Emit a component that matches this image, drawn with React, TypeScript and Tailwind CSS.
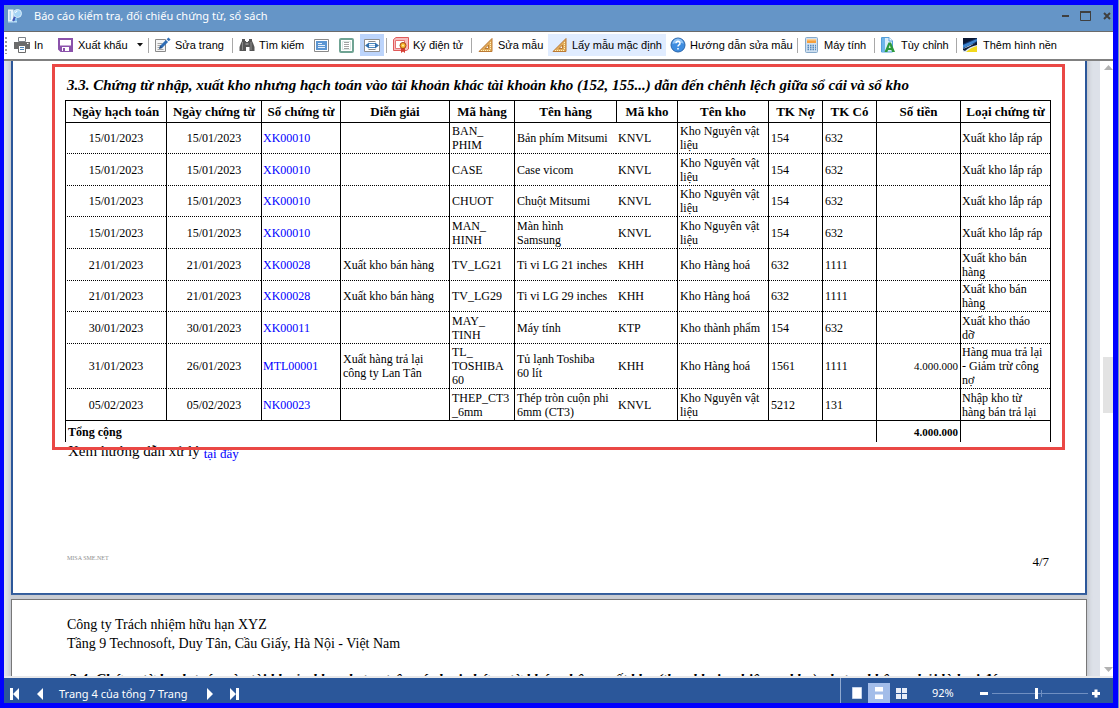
import React, { useState } from 'react';

interface VoucherRow {
  posted: string;
  date: string;
  no: string;
  desc: string;
  item: string[];
  itemName: string;
  store: string;
  storeName: string;
  debit: string;
  credit: string;
  amount: string;
  type: string;
  height: string;
}

const rows: VoucherRow[] = [
  { posted: '15/01/2023', date: '15/01/2023', no: 'XK00010', desc: '', item: ['BAN_', 'PHIM'], itemName: 'Bản phím Mitsumi', store: 'KNVL', storeName: 'Kho Nguyên vật liệu', debit: '154', credit: '632', amount: '', type: 'Xuất kho lắp ráp', height: 'h-[31px]' },
  { posted: '15/01/2023', date: '15/01/2023', no: 'XK00010', desc: '', item: ['CASE'], itemName: 'Case vicom', store: 'KNVL', storeName: 'Kho Nguyên vật liệu', debit: '154', credit: '632', amount: '', type: 'Xuất kho lắp ráp', height: 'h-8' },
  { posted: '15/01/2023', date: '15/01/2023', no: 'XK00010', desc: '', item: ['CHUOT'], itemName: 'Chuột Mitsumi', store: 'KNVL', storeName: 'Kho Nguyên vật liệu', debit: '154', credit: '632', amount: '', type: 'Xuất kho lắp ráp', height: 'h-[31px]' },
  { posted: '15/01/2023', date: '15/01/2023', no: 'XK00010', desc: '', item: ['MAN_', 'HINH'], itemName: 'Màn hình\nSamsung', store: 'KNVL', storeName: 'Kho Nguyên vật liệu', debit: '154', credit: '632', amount: '', type: 'Xuất kho lắp ráp', height: 'h-8' },
  { posted: '21/01/2023', date: '21/01/2023', no: 'XK00028', desc: 'Xuất kho bán hàng', item: ['TV_LG21'], itemName: 'Ti vi LG 21 inches', store: 'KHH', storeName: 'Kho Hàng hoá', debit: '632', credit: '1111', amount: '', type: 'Xuất kho bán hàng', height: 'h-8' },
  { posted: '21/01/2023', date: '21/01/2023', no: 'XK00028', desc: 'Xuất kho bán hàng', item: ['TV_LG29'], itemName: 'Ti vi LG 29 inches', store: 'KHH', storeName: 'Kho Hàng hoá', debit: '632', credit: '1111', amount: '', type: 'Xuất kho bán hàng', height: 'h-[31px]' },
  { posted: '30/01/2023', date: '30/01/2023', no: 'XK00011', desc: '', item: ['MAY_', 'TINH'], itemName: 'Máy tính', store: 'KTP', storeName: 'Kho thành phẩm', debit: '154', credit: '632', amount: '', type: 'Xuất kho tháo\ndỡ', height: 'h-8' },
  { posted: '31/01/2023', date: '26/01/2023', no: 'MTL00001', desc: 'Xuất hàng trả lại công ty Lan Tân', item: ['TL_', 'TOSHIBA', '60'], itemName: 'Tủ lạnh Toshiba\n60 lít', store: 'KHH', storeName: 'Kho Hàng hoá', debit: '1561', credit: '1111', amount: '4.000.000', type: 'Hàng mua trả lại - Giảm trừ công nợ', height: 'h-[45px]' },
  { posted: '05/02/2023', date: '05/02/2023', no: 'NK00023', desc: '', item: ['THEP_CT3', '_6mm'], itemName: 'Thép tròn cuộn phi 6mm (CT3)', store: 'KNVL', storeName: 'Kho Nguyên vật liệu', debit: '5212', credit: '131', amount: '', type: 'Nhập kho từ\nhàng bán trả lại', height: 'h-8' },
];

const columns = [
  { title: 'Ngày hạch toán', width: 'w-[101px]' },
  { title: 'Ngày chứng từ', width: 'w-[95px]' },
  { title: 'Số chứng từ', width: 'w-[79px]' },
  { title: 'Diễn giải', width: '' },
  { title: 'Mã hàng', width: 'w-[65px]' },
  { title: 'Tên hàng', width: 'w-[102px]' },
  { title: 'Mã kho', width: 'w-[61px]' },
  { title: 'Tên kho', width: 'w-[91px]' },
  { title: 'TK Nợ', width: 'w-[54px]' },
  { title: 'TK Có', width: 'w-[54px]' },
  { title: 'Số tiền', width: 'w-[84px]' },
  { title: 'Loại chứng từ', width: 'w-[90px]' },
];

const Icon = ({ children }: { children: React.ReactNode }) => (
  <svg width="16" height="16" viewBox="0 0 16 16" fill="none" className="shrink-0" aria-hidden="true">
    {children}
  </svg>
);

const AppIcon = () => (
  <Icon>
    <path d="M1 1.500h5.500v12H1z" fill="#e8f4fc" />
    <path d="M1 13h9v1.500H1z" fill="#b8dcf4" />
    <path d="M2.500 3h1.500v9H2.500z" fill="#a9d2ef" />
    <circle cx="10.500" cy="5.500" r="4" fill="#a5d4f5" stroke="#d7ecfa" />
    <path d="M8.500 5a2 2 0 0 1 2-2" stroke="#fff" />
    <path d="M8 9l-2 4" stroke="#4356b8" strokeWidth="2" />
    <path d="M9 10v3" stroke="#7fbdec" strokeWidth="2" />
  </Icon>
);

const PrintIcon = () => (
  <Icon>
    <path d="M4.500.5h7v4h-7z" fill="#fff" stroke="#7b8187" />
    <path d="M0 5h16v7H0z" fill="#6b6b6b" />
    <path d="M13 6.500h1.500" stroke="#fff" />
    <path d="M4.500 8.500h7v7h-7z" fill="#fff" stroke="#6b6b6b" />
    <path d="M6 10.500h4M6 12.500h4" stroke="#4a86bd" />
  </Icon>
);

const SaveIcon = () => (
  <Icon>
    <path d="M1 2h13v12H3l-2-2z" fill="#fff" stroke="#8b52ab" strokeWidth="2" />
    <path d="M1 8.500h13V14H3l-2-2z" fill="#8b52ab" />
    <path d="M4 10h7v4H4z" fill="#fff" />
    <path d="M5 11h2v3H5z" fill="#8b52ab" />
  </Icon>
);

const EditIcon = () => (
  <Icon>
    <path d="M.5 2.500h10v12H.5z" fill="#f5f5f5" stroke="#8a8a8a" />
    <path d="M2.500 6.500h5M2.500 8.500h4M2.500 10.500h3M2.500 12.500h6" stroke="#a5a5a5" />
    <path d="M6 10 12 4" stroke="#2f6db5" strokeWidth="3" />
    <path d="M12.700 3.300 14.500 1.500" stroke="#2f6db5" strokeWidth="3" />
    <path d="M5 8.500l2.500 2.500-3.500 1z" fill="#1c4c86" />
  </Icon>
);

const FindIcon = () => (
  <Icon>
    <path d="M3 2h3v2h1v1h2V4h1V2h3v2l1 2 1.500 4v4h-5v-4H7v4H.5v-4L2 6l1-2z" fill="#565656" />
    <path d="M3.500 5v8M12 5v8" stroke="#8b8b8b" />
    <path d="M6.500 7h3" stroke="#bdbdbd" />
  </Icon>
);

const PageWidthIcon = () => (
  <Icon>
    <path d="M.5 2.500h14v12H.5z" fill="#fff" stroke="#8a8a8a" />
    <path d="M2 4h11v9H2z" fill="#5c96d2" />
    <path d="M4 6.500h4M4 8.500h7M4 10.500h7" stroke="#e5f0fb" />
  </Icon>
);

const WholePageIcon = () => (
  <Icon>
    <rect x="1" y="2" width="13" height="13" rx="1" fill="#fff" stroke="#6fa393" strokeWidth="2" />
    <path d="M3.500 4.500h8v8h-8z" fill="#fff" stroke="#dbe7e3" />
    <path d="M5 5.500h5M5 7.500h5M5 9.500h5M5 11.500h5" stroke="#a3a3a3" />
  </Icon>
);

const FitWidthIcon = () => (
  <Icon>
    <path d="M.5 2.500h15v12H.5z" fill="#fff" stroke="#8f8f8f" />
    <path d="M4.500 4.500h7M4.500 12.500h7" stroke="#8a8a8a" />
    <path d="M5 6.500h6M5 10.500h6" stroke="#4a86bd" />
    <path d="M5 8.500h6" stroke="#9fc0e2" />
    <path d="M1 8.500l4-3v6zM15 8.500l-4-3v6z" fill="#326fac" />
  </Icon>
);

const SignIcon = () => (
  <Icon>
    <path d="M.5 2.500 3 .5h12.500V12l-2 1.500H.5z" fill="#f7bcbc" stroke="#e05a5a" />
    <path d="M2.500 3.500h9v8h-9z" fill="#fff" stroke="#e57272" />
    <path d="M8 10v6l2-1.500 2 1.500v-6z" fill="#d63c32" />
    <circle cx="10" cy="8.500" r="3" fill="#f5b529" stroke="#a84218" />
    <circle cx="10" cy="8.500" r="1" fill="#fff0a8" />
  </Icon>
);

const RulerIcon = () => (
  <Icon>
    <path d="M14 1.500v13H1z" fill="#e3ac59" stroke="#bb7a35" />
    <path d="M10.500 8v3.500H7z" fill="#fff" stroke="#bb7a35" />
    <path d="M3 13.500h10" stroke="#fff3bd" strokeDasharray="1 1" />
    <path d="M12.500 5v8" stroke="#fff3bd" strokeDasharray="1 1" />
  </Icon>
);

const HelpIcon = () => (
  <Icon>
    <circle cx="8" cy="8" r="7" fill="#3e8de0" stroke="#2a65aa" />
    <path d="M2.500 7a5.500 5.500 0 0 1 11 0c-3-2-7-1-11 0z" fill="#8fc3f5" />
    <path d="M6 6.200a2 2 0 1 1 3 1.700c-.7.400-1 .8-1 1.600" stroke="#fff" strokeWidth="1.500" />
    <path d="M7.200 11h1.600v1.600H7.200z" fill="#fff" />
  </Icon>
);

const CalculatorIcon = () => (
  <Icon>
    <rect x="1.500" y=".5" width="12" height="15" rx="1" fill="#cfe0f0" stroke="#86a9ca" />
    <path d="M3 2h9v4H3z" fill="#f6a03c" />
    <path d="M3 2h9v1.500H3z" fill="#fbcf94" />
    <path d="M3.500 8.500h8.500M3.500 10.500h8.500M3.500 12.500h8.500" stroke="#5689bd" strokeWidth="1.300" strokeDasharray="1.500 1" />
  </Icon>
);

const CustomIcon = () => (
  <Icon>
    <path d="M.5.5H8L11.500 4v11H.5z" fill="#d7ecfb" stroke="#549fda" />
    <path d="M1 1h3v14H1z" fill="#6db5ea" />
    <path d="M8 .5V4h3.500" fill="#fff" stroke="#549fda" />
    <path d="M3.500 15 7.500 5.500H10L14 15h-3l-.6-2H7l-.6 2z" fill="#2c9a3c" />
    <path d="M7.700 11l1-3 1 3z" fill="#e2f7e0" />
  </Icon>
);

const BackgroundIcon = () => (
  <Icon>
    <path d="M0 1h14v14H0z" fill="#dfeaf6" />
    <path d="M0 1h14v5C9 7 4 9 0 12z" fill="#14386f" />
    <path d="M0 1h14C9 3 4 5 0 7z" fill="#0a1733" />
    <path d="M0 8c5-2 9-4 14-6v2C10 7 5 9 0 11z" fill="#3f86d0" />
    <path d="M0 12c5-2 9-4 14-7v3C9 9 5 11 2 14L0 13z" fill="#0d1c38" />
    <path d="M3 15c3-3 7-5 11-6v6z" fill="#f3d91c" />
  </Icon>
);

interface ToolButtonProps {
  icon: React.ReactNode;
  label: string;
  width: string;
  iconOnly?: boolean;
  active?: string;
}

const ToolButton = ({ icon, label, width, iconOnly, active = '' }: ToolButtonProps) => (
  <button
    type="button"
    aria-label={label}
    className={`flex h-[22px] shrink-0 items-center gap-1 px-1 whitespace-nowrap ${width} ${active}`}
  >
    {icon}
    {!iconOnly && <span>{label}</span>}
  </button>
);

const Separator = () => (
  <span className="flex h-[15px] w-[5px] shrink-0 justify-center">
    <span className="w-px bg-[#a8a8a8]" />
  </span>
);

const Toolbar = () => (
  <div className="flex h-[27px] shrink-0 items-center overflow-hidden bg-white pb-[1px] font-['Liberation_Sans',sans-serif] text-[11px] leading-4 text-black">
    <svg width="6" height="18" viewBox="0 0 6 18" className="shrink-0" aria-hidden="true">
      <path d="M2 1v17" stroke="#9a9a9a" strokeWidth="2" strokeDasharray="2 2" />
    </svg>
    <ToolButton icon={<PrintIcon />} label="In" width="w-[44px]" />
    <ToolButton icon={<SaveIcon />} label="Xuất khẩu" width="w-[80px]" />
    <button type="button" aria-label="Chọn định dạng xuất khẩu" className="flex h-[22px] w-3 shrink-0 items-center justify-center">
      <svg width="6" height="4" viewBox="0 0 6 4" aria-hidden="true"><path d="M0 0h6L3 3.500z" fill="#111" /></svg>
    </button>
    <Separator />
    <ToolButton icon={<EditIcon />} label="Sửa trang" width="w-[79px]" />
    <Separator />
    <ToolButton icon={<FindIcon />} label="Tìm kiếm" width="w-[75px]" />
    <ToolButton icon={<PageWidthIcon />} label="Cỡ thật" width="w-[25px]" iconOnly />
    <ToolButton icon={<WholePageIcon />} label="Cả trang" width="w-[25px]" iconOnly />
    <ToolButton icon={<FitWidthIcon />} label="Vừa chiều rộng" width="w-[24px]" iconOnly active="bg-[#bcd4fb]" />
    <Separator />
    <ToolButton icon={<SignIcon />} label="Ký điện tử" width="w-[80px]" />
    <Separator />
    <ToolButton icon={<RulerIcon />} label="Sửa mẫu" width="w-[74px]" />
    <ToolButton icon={<RulerIcon />} label="Lấy mẫu mặc định" width="w-[118px]" active="bg-[#e0ecff]" />
    <ToolButton icon={<HelpIcon />} label="Hướng dẫn sửa mẫu" width="w-[129px]" />
    <Separator />
    <ToolButton icon={<CalculatorIcon />} label="Máy tính" width="w-[72px]" />
    <Separator />
    <ToolButton icon={<CustomIcon />} label="Tùy chỉnh" width="w-[77px]" />
    <Separator />
    <ToolButton icon={<BackgroundIcon />} label="Thêm hình nền" width="w-[97px]" />
  </div>
);

const VoucherTable = () => (
  <table className="w-full table-fixed border-separate border-spacing-0 border-t border-r border-black text-[12px] leading-[14px]">
    <colgroup>
      {columns.map((col) => (
        <col key={col.title} className={col.width} />
      ))}
    </colgroup>
    <thead>
      <tr className="h-[22px] text-[13px]">
        {columns.map((col) => (
          <th key={col.title} scope="col" className="border-b border-l border-black p-0 text-center font-bold whitespace-nowrap">
            {col.title}
          </th>
        ))}
      </tr>
    </thead>
    <tbody>
      {rows.map((row, index) => {
        // the last row closes the body with a solid rule
        const line = index === rows.length - 1 ? 'border-b border-l border-black' : 'border-b border-l border-black [border-bottom-style:dotted]';
        const plain = index === rows.length - 1 ? 'border-b border-black' : 'border-b border-dotted border-black';
        return (
          <tr key={index} className={row.height}>
            <td className={`${line} p-0 text-center`}>{row.posted}</td>
            <td className={`${line} p-0 text-center`}>{row.date}</td>
            <td className={`${line} px-px py-0`}>
              <a href="#" className="text-[#0000ff]">{row.no}</a>
            </td>
            <td className={`${line} px-0.5 py-0`}>{row.desc}</td>
            <td className={`${line} px-0.5 py-0`}>
              {row.item.map((part) => (
                <React.Fragment key={part}>
                  {part}
                  <wbr />
                </React.Fragment>
              ))}
            </td>
            <td className={`${line} px-0.5 py-0 whitespace-pre-line`}>{row.itemName}</td>
            <td className={`${plain} px-0.5 py-0`}>{row.store}</td>
            <td className={`${line} px-0.5 py-0`}>{row.storeName}</td>
            <td className={`${line} px-0.5 py-0`}>{row.debit}</td>
            <td className={`${line} px-0.5 py-0`}>{row.credit}</td>
            <td className={`${line} px-0.5 py-0 text-right text-[11px]`}>{row.amount}</td>
            <td className={`${line} px-px py-0 whitespace-pre-line`}>{row.type}</td>
          </tr>
        );
      })}
    </tbody>
    <tfoot>
      <tr className="h-[21px] font-bold">
        <th scope="row" colSpan={10} className="border-l border-black px-0.5 py-0 text-left text-[12px]">Tổng cộng</th>
        <td className="border-l border-black px-0.5 py-0 text-right text-[11px]">4.000.000</td>
        <td className="border-l border-black p-0" />
      </tr>
    </tfoot>
  </table>
);

const StatusBar = () => {
  const [zoom, setZoom] = useState(46);

  return (
    <footer className="flex h-[25px] shrink-0 items-center bg-[#2b579a] pt-1.5 font-['Noto_Sans','Open_Sans',sans-serif] text-[11px] leading-4 text-white">
      <button type="button" aria-label="Trang đầu" className="ml-1.5 w-[21px]">
        <svg width="10" height="12" viewBox="0 0 10 12" aria-hidden="true"><path d="M0 0h3v12H0zM9 0v12L3 6z" fill="#fff" /></svg>
      </button>
      <button type="button" aria-label="Trang trước" className="ml-1.5 w-[22px]">
        <svg width="6" height="12" viewBox="0 0 6 12" aria-hidden="true"><path d="M6 0v12L0 6z" fill="#fff" /></svg>
      </button>
      <span className="w-[148px] whitespace-nowrap">Trang 4 của tổng 7 Trang</span>
      <button type="button" aria-label="Trang sau" className="w-[23px]">
        <svg width="6" height="12" viewBox="0 0 6 12" aria-hidden="true"><path d="M0 0v12l6-6z" fill="#fff" /></svg>
      </button>
      <button type="button" aria-label="Trang cuối">
        <svg width="9" height="12" viewBox="0 0 9 12" aria-hidden="true"><path d="M6 0h3v12H6zM0 0v12l6-6z" fill="#fff" /></svg>
      </button>

      <div className="-mt-1.5 ml-auto flex h-[25px] items-center border-l border-[#8fa9d0] pt-[5px] pl-[5px]">
        <button type="button" aria-label="Một trang" className="flex h-5 w-[22px] items-center justify-center">
          <svg width="10" height="12" viewBox="0 0 10 12" aria-hidden="true"><path d="M.5.5h9v11h-9z" fill="#fff" stroke="#c5d4ec" /></svg>
        </button>
        <button type="button" aria-label="Cuộn liên tục" className="flex h-5 w-[22px] items-center justify-center bg-[#a3bde9]">
          <svg width="8" height="12" viewBox="0 0 8 12" aria-hidden="true"><path d="M0 0h8v4.500H0zM0 7.500h8V12H0z" fill="#fff" /></svg>
        </button>
        <button type="button" aria-label="Nhiều trang" className="flex h-5 w-[23px] items-center justify-center">
          <svg width="11" height="11" viewBox="0 0 11 11" aria-hidden="true"><path d="M0 0h5v5H0zM6 0h5v5H6zM0 6h5v5H0zM6 6h5v5H6z" fill="#e8eef8" /></svg>
        </button>
        <span className="w-[50px] pl-[19px]">92%</span>
        <button type="button" aria-label="Thu nhỏ" className="ml-[17px] w-3">
          <svg width="8" height="11" viewBox="0 0 8 11" aria-hidden="true"><path d="M0 4h8v3H0z" fill="#fff" /></svg>
        </button>
        <span className="relative flex h-3 items-center">
          <span className="absolute left-[49px] h-[7px] w-px bg-[#6f8fc2]" />
          <input
            type="range"
            aria-label="Tỷ lệ thu phóng"
            value={zoom}
            onChange={(e) => setZoom(Number(e.target.value))}
            className="relative h-[11px] w-[96px] appearance-none bg-[linear-gradient(#6f8fc2,#6f8fc2)] bg-[length:100%_1px] bg-center bg-no-repeat [&::-webkit-slider-thumb]:h-[11px] [&::-webkit-slider-thumb]:w-[3px] [&::-webkit-slider-thumb]:appearance-none [&::-webkit-slider-thumb]:bg-white"
          />
        </span>
        <button type="button" aria-label="Phóng to" className="mr-3 ml-1 w-[9px]">
          <svg width="8" height="11" viewBox="0 0 8 11" aria-hidden="true"><path d="M0 4h8v3H0zM2.500 1.500h3v8h-3z" fill="#fff" /></svg>
        </button>
      </div>
    </footer>
  );
};

const App = () => {
  return (
    <div className="h-screen border-r border-[#6595c7]">
      <div className="flex h-full flex-col overflow-hidden border-t-[5px] border-r-[5px] border-b-[5px] border-l-4 border-[#0000ff] bg-white">
        <header className="flex h-[27px] shrink-0 items-center border-b border-[#6b6b6b] bg-[#6595c7] pb-1 pl-[3px] font-['Noto_Sans','Open_Sans',sans-serif] text-[11px] leading-4 text-white">
          <AppIcon />
          <h1 className="ml-[11px] flex-1 whitespace-nowrap">Báo cáo kiểm tra, đối chiếu chứng từ, sổ sách</h1>
          <button type="button" aria-label="Thu nhỏ cửa sổ" className="w-[18px]">
            <svg width="8" height="11" viewBox="0 0 8 11" aria-hidden="true"><path d="M0 4h7v2H0z" fill="#3f3f3f" /></svg>
          </button>
          <button type="button" aria-label="Phóng to cửa sổ" className="w-[23px]">
            <svg width="11" height="11" viewBox="0 0 11 11" aria-hidden="true"><path d="M.5.5h10v9H.5z" fill="none" stroke="#3f3f3f" /><path d="M0 0h11v2H0z" fill="#3f3f3f" /></svg>
          </button>
          <button type="button" aria-label="Đóng cửa sổ" className="w-[10px]">
            <svg width="8" height="8" viewBox="0 0 8 8" aria-hidden="true"><path d="M1 1l6 6M7 1 1 7" stroke="#3f3f3f" strokeWidth="2" /></svg>
          </button>
        </header>
        <Toolbar />

        <main className="flex min-h-0 flex-1 border-t-2 border-b-2 border-t-[#808080] border-b-[#e8e8ea] bg-white">
          <div className="flex min-w-0 flex-1 flex-col gap-1 overflow-hidden bg-[#dde1e9] pr-[13px] pl-[7px] font-['Liberation_Serif',serif] text-[13px] leading-[19px] text-black">
            {/* Page 4 */}
            <article className="shrink-0 border-x-2 border-b-2 border-[#2b579a] bg-white pb-[22px] shadow-[0_0_4px_2px_#c3c6cc]">
              <section className="relative z-10 mt-[3px] mr-5 ml-[39px] border-[3px] border-[#ea4845] pr-[11px] pb-[5px] pl-2.5">
                <h2 className="pt-1 pl-0.5 text-[15px] leading-[29px] font-bold whitespace-nowrap italic">
                  3.3. Chứng từ nhập, xuất kho nhưng hạch toán vào tài khoản khác tài khoản kho (152, 155...) dẫn đến chênh lệch giữa sổ cái và sổ kho
                </h2>
                <VoucherTable />
              </section>
              <p className="-mt-2 flex h-[18px] items-start gap-1 pl-[55px] text-[15px] leading-[18px]">
                Xem hướng dẫn xử lý
                <a href="#" className="pt-[3px] text-[13px] text-[#0000ff]">tại đây</a>
              </p>
              <div className="mt-[92px] mr-9 ml-[54px] flex justify-between">
                <span className="text-[6px] leading-[12px] text-[#8f8f8f]">MISA SME.NET</span>
                <span>4/7</span>
              </div>
            </article>

            {/* Page 5 */}
            <article className="min-h-0 flex-1 overflow-hidden border-x border-t border-[#777] bg-white pt-[15px] pl-[55px] text-[14px] shadow-[0_0_4px_2px_#c3c6cc]">
              <p>Công ty Trách nhiệm hữu hạn XYZ</p>
              <p>Tầng 9 Technosoft, Duy Tân, Cầu Giấy, Hà Nội - Việt Nam</p>
              <h2 className="mt-4 pl-0.5 text-[15px] leading-[20px] font-bold whitespace-nowrap italic">
                3.4. Chứng từ hạch toán vào tài khoản kho nhưng trên các loại chứng từ khác nhập, xuất kho (theo khai nghiệp vụ kho) nhưng không phải là loại đó
              </h2>
            </article>
          </div>

          {/* Vertical scroll bar */}
          <div className="flex w-[13px] shrink-0 flex-col items-end overflow-hidden bg-white pt-1 pb-1">
            <svg width="9" height="5" viewBox="0 0 9 5" aria-hidden="true"><path d="M0 5h9L4.500 0z" fill="#b2b2b2" /></svg>
            <span className="mt-[287px] h-14 w-2.5 bg-[#e3e3e3]" />
            <svg width="9" height="5" viewBox="0 0 9 5" className="mt-auto" aria-hidden="true"><path d="M0 0h9L4.500 5z" fill="#b2b2b2" /></svg>
          </div>
        </main>
        <StatusBar />
      </div>
    </div>
  );
};

export default App;
